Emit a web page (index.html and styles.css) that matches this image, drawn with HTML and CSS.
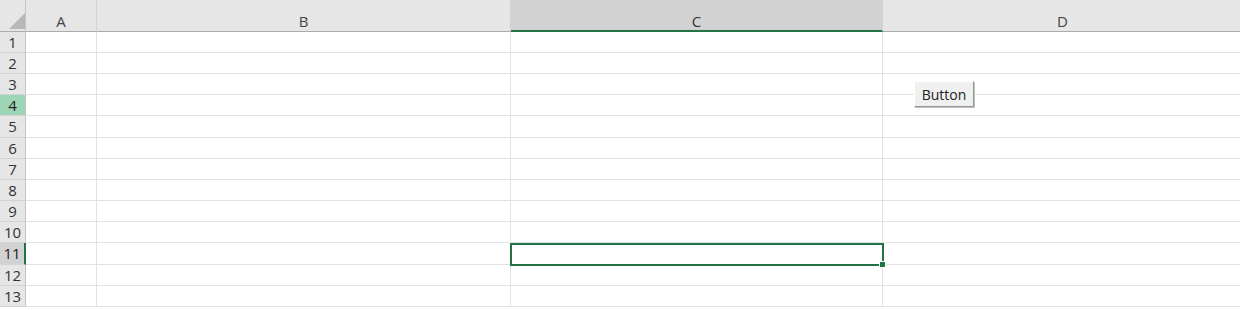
FILE: index.html
```html
<!DOCTYPE html>
<html lang="en">
<head>
    <meta charset="UTF-8">
    <title>Sheet1</title>
    <link rel="stylesheet" href="styles.css">
</head>
<body>
    <div class="sheet">
        <!-- Column headers -->
        <div class="corner">
            <svg width="26" height="31" viewBox="0 0 26 31"><polygon points="25,13 25,29 9,29" fill="#b8b8b8"/></svg>
        </div>
        <div class="col-head">A</div>
        <div class="col-head">B</div>
        <div class="col-head selected">C</div>
        <div class="col-head">D</div>

        <div class="row-head">1</div><div class="cell"></div><div class="cell"></div><div class="cell"></div><div class="cell"></div>
        <div class="row-head">2</div><div class="cell"></div><div class="cell"></div><div class="cell"></div><div class="cell"></div>
        <div class="row-head">3</div><div class="cell"></div><div class="cell"></div><div class="cell"></div><div class="cell"></div>
        <div class="row-head hilite">4</div><div class="cell"></div><div class="cell"></div><div class="cell"></div><div class="cell"></div>
        <div class="row-head">5</div><div class="cell"></div><div class="cell"></div><div class="cell"></div><div class="cell"></div>
        <div class="row-head">6</div><div class="cell"></div><div class="cell"></div><div class="cell"></div><div class="cell"></div>
        <div class="row-head">7</div><div class="cell"></div><div class="cell"></div><div class="cell"></div><div class="cell"></div>
        <div class="row-head">8</div><div class="cell"></div><div class="cell"></div><div class="cell"></div><div class="cell"></div>
        <div class="row-head">9</div><div class="cell"></div><div class="cell"></div><div class="cell"></div><div class="cell"></div>
        <div class="row-head">10</div><div class="cell"></div><div class="cell"></div><div class="cell"></div><div class="cell"></div>
        <div class="row-head selected">11</div><div class="cell"></div><div class="cell"></div><div class="cell active"><span class="fill-handle"></span></div><div class="cell"></div>
        <div class="row-head">12</div><div class="cell"></div><div class="cell"></div><div class="cell"></div><div class="cell"></div>
        <div class="row-head">13</div><div class="cell"></div><div class="cell"></div><div class="cell"></div><div class="cell"></div>

        <button class="form-button" type="button">Button</button>
    </div>
</body>
</html>
```

FILE: styles.css
```css
/* Page */
body {
    margin: 0;
    background-color: #ffffff;
    font-family: 'Open Sans', 'Noto Sans', Arial, sans-serif;
    overflow: hidden;
}

/* Grid of cells */
.sheet {
    position: relative;
    display: grid;
    grid-template-columns: 26px 71px 414px 372px 360px;
    grid-template-rows: 32px 21px 21px 21px 21px 22px 21px 21px 21px 21px 21px 22px 21px 21px;
}

.corner {
    background-color: #e6e6e6;
    border-right: 1px solid #c4c4c4;
    border-bottom: 1px solid #ababab;
}

.corner svg {
    display: block;
}

.col-head {
    box-sizing: border-box;
    height: 32px;
    padding-top: 10px;
    background-color: #e6e6e6;
    border-right: 1px solid #d2d2d2;
    border-bottom: 1px solid #ababab;
    color: #444;
    font-size: 15px;
    text-align: center;
    line-height: 22px;
    overflow: hidden;
}

.col-head.selected {
    background-color: #d2d2d2;
    border-bottom: 2px solid #217346;
    color: #333;
}

.row-head {
    background-color: #e6e6e6;
    border-right: 1px solid #c4c4c4;
    border-bottom: 1px solid #d4d4d4;
    color: #333;
    font-size: 15px;
    text-align: center;
    line-height: 21px;
}

.row-head.hilite {
    background-color: #9fd5b7;
    color: #222;
}

.row-head.selected {
    background-color: #d2d2d2;
    border-right: 2px solid #217346;
    color: #222;
}

.cell {
    border-right: 1px solid #e1e1e1;
    border-bottom: 1px solid #e1e1e1;
}

/* Active cell outline */
.cell.active {
    position: relative;
}

.cell.active::before {
    content: "";
    position: absolute;
    top: 0;
    left: -1px;
    right: -2px;
    bottom: -2px;
    border: 2px solid #217346;
}

.fill-handle {
    position: absolute;
    right: -4px;
    bottom: -4px;
    width: 5px;
    height: 5px;
    background-color: #217346;
    border: 1px solid #ffffff;
    z-index: 1;
}

/* Form control sitting on the sheet */
.form-button {
    position: absolute;
    left: 914px;
    top: 81px;
    width: 60px;
    height: 26px;
    padding: 0;
    margin: 0;
    font-family: 'Open Sans', 'Noto Sans', Arial, sans-serif;
    font-size: 14px;
    color: #222;
    background-color: #f0f0f0;
    border: 1px solid;
    border-color: #ffffff #8f9a94 #8f9a94 #ffffff;
    box-shadow: 1px 1px 0 #c0c0c0;
}
```
